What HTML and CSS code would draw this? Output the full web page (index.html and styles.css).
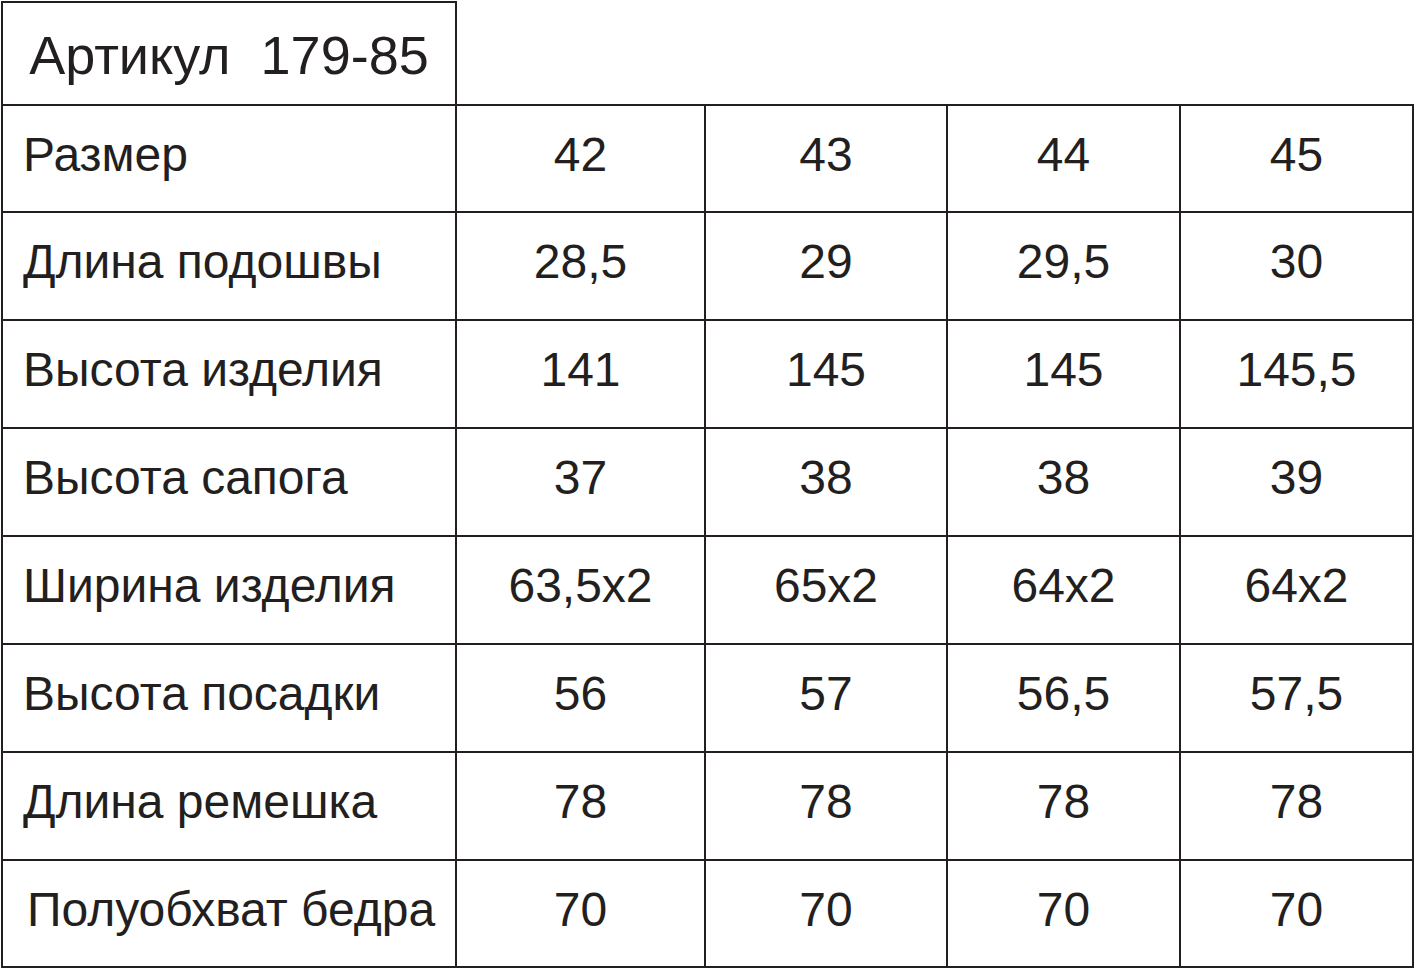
FILE: index.html
```html
<!DOCTYPE html>
<html lang="ru">
<head>
<meta charset="utf-8">
<title>Артикул 179-85</title>
<link rel="stylesheet" href="styles.css">
</head>
<body>
<div class="sheet">
  <div class="article">Артикул&nbsp; 179-85</div>
  <div class="grid">
    <div class="cell label">Размер</div>
    <div class="cell">42</div>
    <div class="cell">43</div>
    <div class="cell">44</div>
    <div class="cell">45</div>

    <div class="cell label">Длина подошвы</div>
    <div class="cell">28,5</div>
    <div class="cell">29</div>
    <div class="cell">29,5</div>
    <div class="cell">30</div>

    <div class="cell label">Высота изделия</div>
    <div class="cell">141</div>
    <div class="cell">145</div>
    <div class="cell">145</div>
    <div class="cell">145,5</div>

    <div class="cell label">Высота сапога</div>
    <div class="cell">37</div>
    <div class="cell">38</div>
    <div class="cell">38</div>
    <div class="cell">39</div>

    <div class="cell label">Ширина изделия</div>
    <div class="cell">63,5x2</div>
    <div class="cell">65x2</div>
    <div class="cell">64x2</div>
    <div class="cell">64x2</div>

    <div class="cell label">Высота посадки</div>
    <div class="cell">56</div>
    <div class="cell">57</div>
    <div class="cell">56,5</div>
    <div class="cell">57,5</div>

    <div class="cell label">Длина ремешка</div>
    <div class="cell">78</div>
    <div class="cell">78</div>
    <div class="cell">78</div>
    <div class="cell">78</div>

    <div class="cell label label-wide">Полуобхват бедра</div>
    <div class="cell">70</div>
    <div class="cell">70</div>
    <div class="cell">70</div>
    <div class="cell">70</div>
  </div>
</div>
</body>
</html>
```

FILE: styles.css
```css
* {
  box-sizing: border-box;
}

html, body {
  margin: 0;
  padding: 0;
  background: #ffffff;
}

body {
  font-family: "Liberation Sans", Arial, sans-serif;
  color: #231f20;
}

.sheet {
  padding: 1px 0 0 1px;
  width: 1416px;
}

.article {
  width: 456px;
  height: 103px;
  border: 2px solid #231f20;
  border-bottom: none;
  font-size: 54px;
  line-height: 1;
  display: flex;
  align-items: center;
  justify-content: center;
  padding-top: 2px;
}

.grid {
  display: grid;
  width: 1413px;
  grid-template-columns: 454px 249px 242px 233px 233px;
  grid-template-rows: 107px repeat(6, 108px) 107px;
  border-left: 2px solid #231f20;
  border-top: 2px solid #231f20;
}

.cell {
  border-right: 2px solid #231f20;
  border-bottom: 2px solid #231f20;
  font-size: 48px;
  line-height: 1;
  display: flex;
  align-items: center;
  justify-content: center;
  padding-bottom: 8px;
}

.label {
  justify-content: flex-start;
  padding-left: 20px;
}

.label-wide {
  padding-left: 24px;
}
```
